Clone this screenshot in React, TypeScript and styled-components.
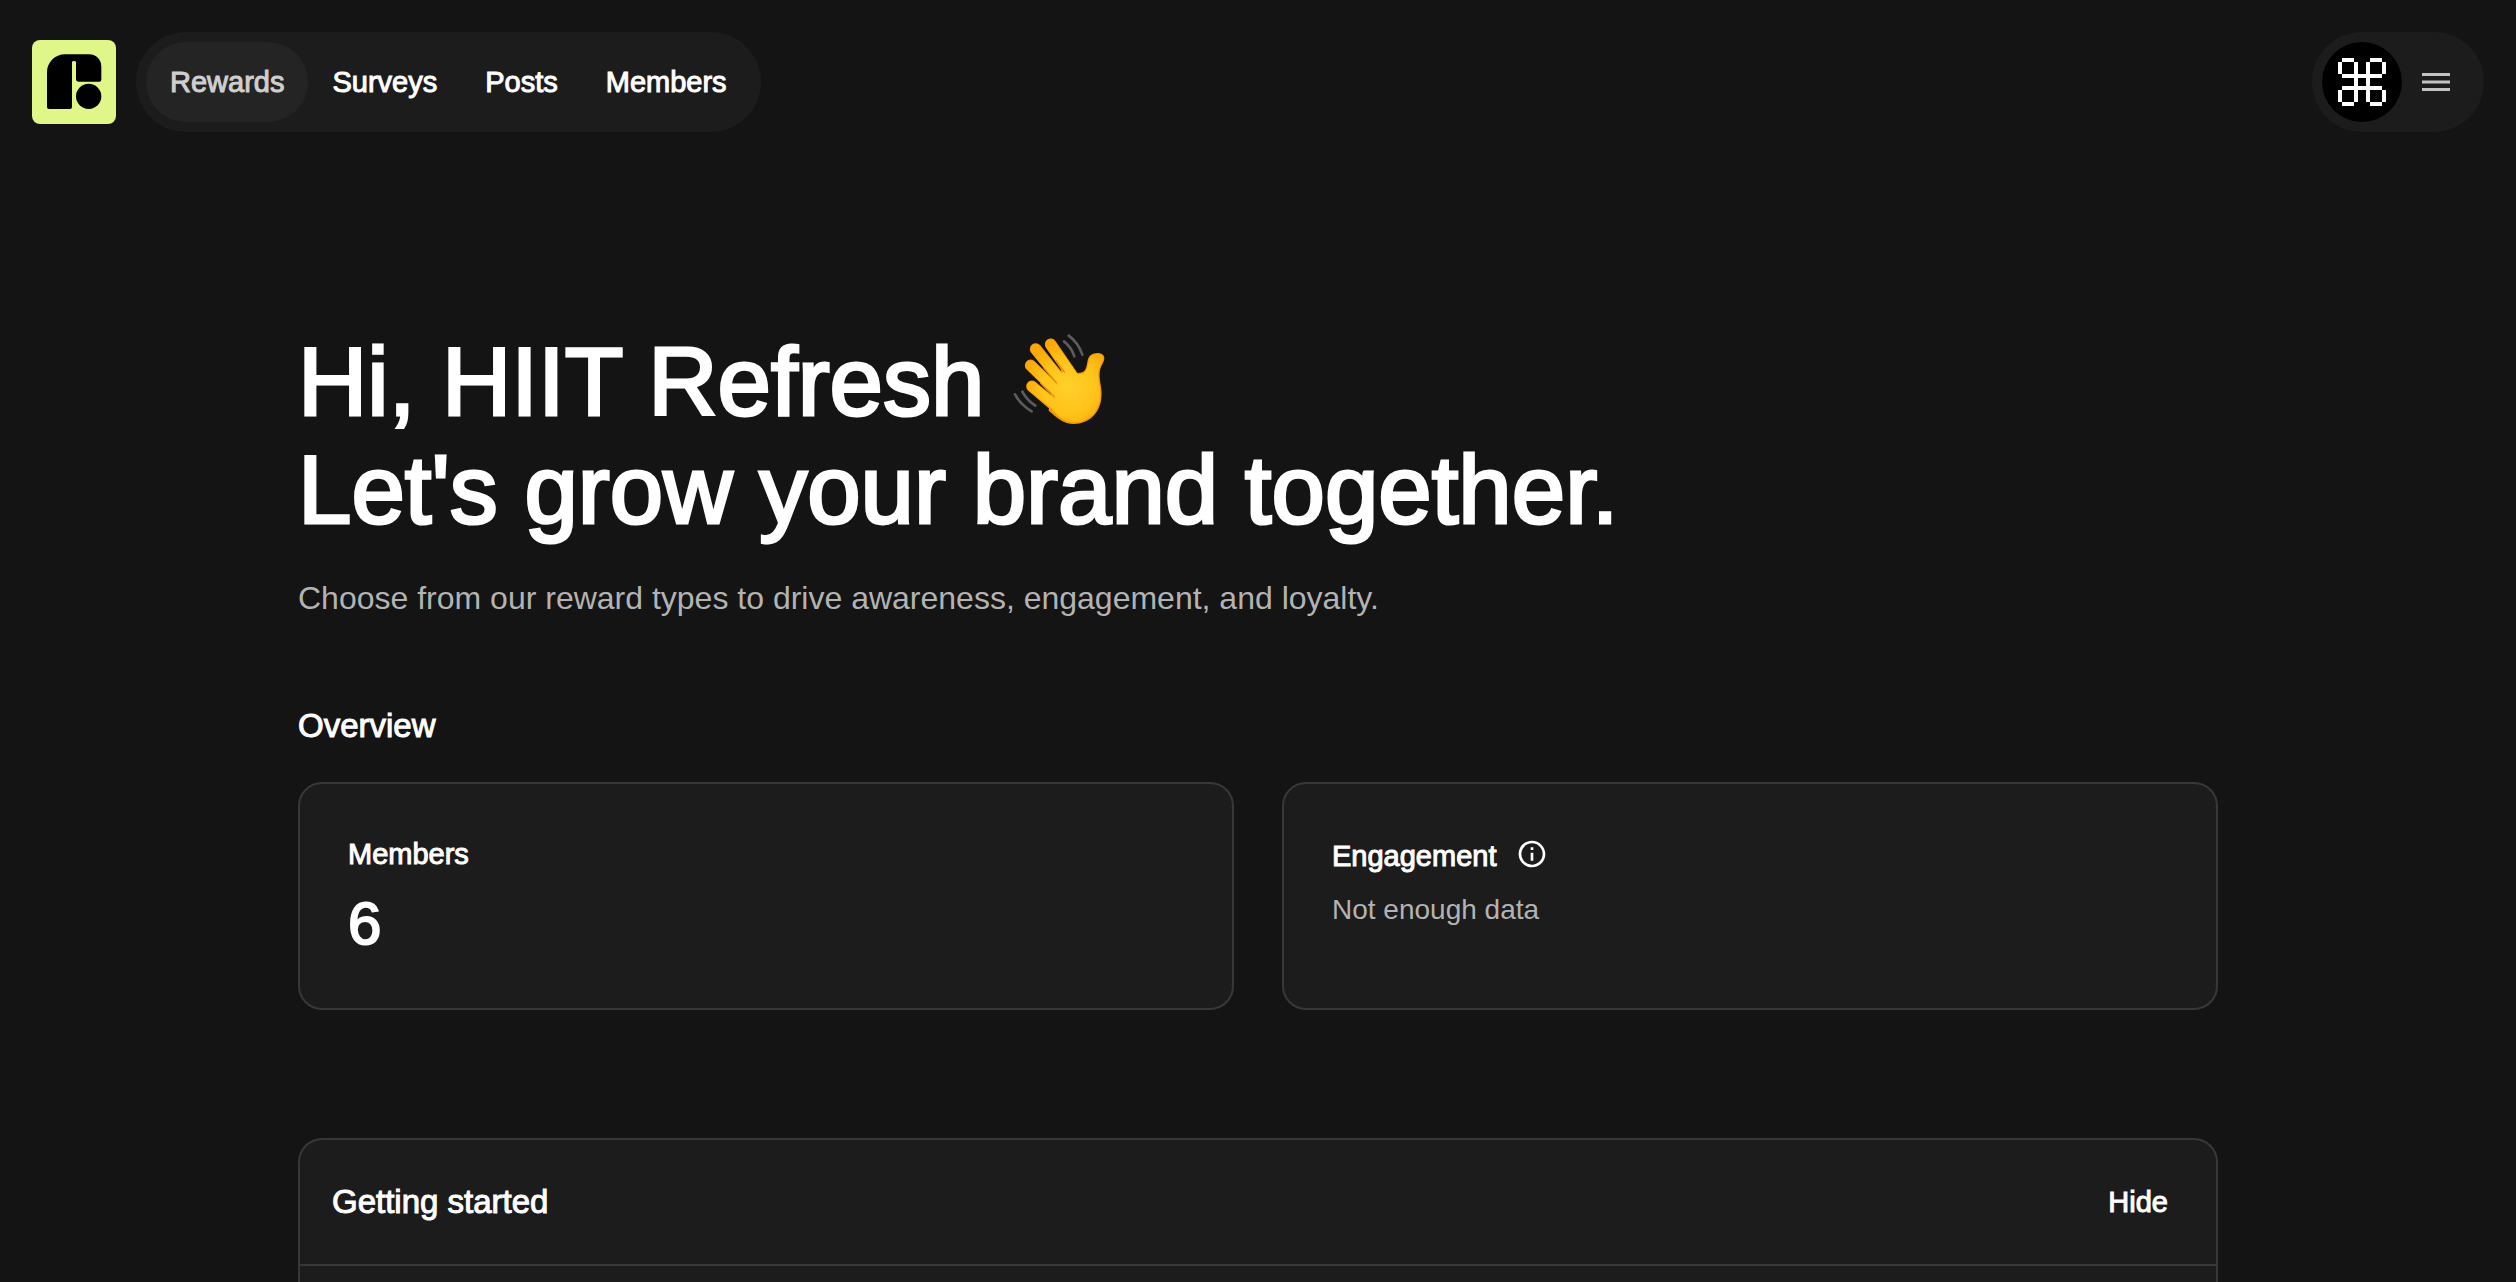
import React from "react";
import styled, { createGlobalStyle } from "styled-components";

const GlobalStyle = createGlobalStyle`
  * { box-sizing: border-box; }
  body {
    margin: 0;
    background: #141414;
    color: #ffffff;
    font-family: "Liberation Sans", Arial, sans-serif;
    font-size: 28px;
    line-height: 44px;
  }
  h1, h2, h3, p { margin: 0; font-weight: 400; }
`;

const Page = styled.div`
  min-height: 100vh;
  display: flex;
  flex-direction: column;
`;

const Header = styled.header`
  display: flex;
  align-items: center;
  gap: 20px;
  padding: 32px;
`;

const LogoLink = styled.a`
  display: flex;
  width: 84px;
  height: 84px;
  border-radius: 8px;
  background: #dff688;
`;

const Capsule = styled.div`
  display: flex;
  align-items: center;
  height: 100px;
  padding: 10px;
  border-radius: 50px;
  background: #1c1c1c;
`;

const Account = styled(Capsule)`
  margin-left: auto;
`;

const NavLink = styled.a<{ $active?: boolean }>`
  display: flex;
  align-items: center;
  height: 80px;
  padding: 0 24px;
  border-radius: 40px;
  color: ${(p) => (p.$active ? "#cfcfcf" : "#ffffff")};
  background: ${(p) => (p.$active ? "#242424" : "transparent")};
  font-size: 29px;
  text-decoration: none;
  -webkit-text-stroke: 1px currentColor;
`;

const PlainButton = styled.button`
  display: flex;
  align-items: center;
  justify-content: center;
  border: 0;
  padding: 0;
  background: none;
  color: inherit;
  font: inherit;
  cursor: pointer;
`;

const AvatarButton = styled(PlainButton)`
  width: 80px;
  height: 80px;
  border-radius: 50%;
  background: #000000;
`;

const MenuButton = styled(PlainButton)`
  height: 80px;
  padding: 0 24px 0 20px;
  color: #c2c2c2;
`;

const HideButton = styled(PlainButton)`
  padding: 8px 16px;
  font-size: 29px;
  -webkit-text-stroke: 1px currentColor;
`;

const Main = styled.main`
  flex: 1;
  display: flex;
  flex-direction: column;
  width: 100%;
  max-width: 1984px;
  margin: 0 auto;
  padding: 164px 32px 0;
`;

const Greeting = styled.h1`
  font-size: 96px;
  line-height: 108px;
  -webkit-text-stroke: 3px currentColor;
`;

const Wave = styled.svg`
  width: 96px;
  height: 96px;
  vertical-align: -11px;
`;

const Subtitle = styled.p`
  margin-top: 30px;
  font-size: 32px;
  line-height: 48px;
  color: #b3b3b3;
`;

const SectionTitle = styled.h2`
  font-size: 33px;
  line-height: 48px;
  -webkit-text-stroke: 1px currentColor;
`;

const Overview = styled.section`
  display: flex;
  flex-direction: column;
  gap: 32px;
  margin-top: 80px;
`;

const Cards = styled.div`
  display: grid;
  grid-template-columns: 1fr 1fr;
  gap: 48px;
`;

const Card = styled.article`
  padding: 48px;
  border: 2px solid #383838;
  border-radius: 24px;
  background: #1c1c1c;
`;

const CardTitle = styled.h3`
  font-size: 29px;
  line-height: 44px;
  -webkit-text-stroke: 1px currentColor;
`;

const CardTitleRow = styled.div`
  display: flex;
  align-items: center;
  gap: 20px;
  height: 48px;
`;

const InfoButton = styled(PlainButton)`
  margin-bottom: 4px;
`;

const Figure = styled.p`
  margin-top: 12px;
  font-size: 60px;
  line-height: 72px;
  -webkit-text-stroke: 2px currentColor;
`;

const CardNote = styled.p`
  margin-top: 8px;
  color: #b3b3b3;
`;

const Panel = styled.section`
  flex: 1;
  margin-top: 128px;
  border: 2px solid #383838;
  border-bottom: 0;
  border-radius: 24px 24px 0 0;
  background: #1c1c1c;
`;

const PanelHeader = styled.div`
  display: flex;
  align-items: center;
  justify-content: space-between;
  height: 126px;
  padding: 0 32px;
  border-bottom: 2px solid #383838;
`;

const navItems = ["Rewards", "Surveys", "Posts", "Members"];

function Logo() {
  return (
    <svg viewBox="0 0 252 252" width="84" height="84" aria-hidden="true">
      <path d="M99 43H172C192 43 208 59 208 79V119Q208 125 202 125H139Q132 125 132 118V67Q132 63 126 63Q120 63 120 67V201Q120 207 114 207H51Q45 207 45 201V97C45 67 69 43 99 43Z" />
      <circle cx="170" cy="169" r="38" />
    </svg>
  );
}

function CommandGlyph() {
  return (
    <svg viewBox="0 0 12 12" width="48" height="48" fill="#fff" shapeRendering="crispEdges" aria-hidden="true">
      <path d="M1 0h3v1H1zM8 0h3v1H8zM0 1h1v3H0zM4 1h1v10H4zM7 1h1v10H7zM11 1h1v3h-1zM1 4h10v1H1zM1 7h10v1H1zM0 8h1v3H0zM11 8h1v3h-1zM1 11h3v1H1zM8 11h3v1H8z" />
    </svg>
  );
}

function MenuGlyph() {
  return (
    <svg viewBox="0 0 28 18" width="28" height="18" fill="currentColor" aria-hidden="true">
      <path d="M0 0h28v3H0zM0 7.5h28v3H0zM0 15h28v3H0z" />
    </svg>
  );
}

function InfoGlyph() {
  return (
    <svg viewBox="0 0 24 24" width="32" height="32" fill="currentColor" aria-hidden="true">
      <path d="M11 7h2v2h-2zm0 4h2v6h-2zm1-9C6.48 2 2 6.48 2 12s4.48 10 10 10 10-4.48 10-10S17.52 2 12 2zm0 18c-4.41 0-8-3.59-8-8s3.59-8 8-8 8 3.59 8 8-3.59 8-8 8z" />
    </svg>
  );
}

function WavingHand() {
  return (
    <Wave viewBox="77 61 288 288" role="img" aria-label="Waving hand">
      <defs>
        <radialGradient id="skin" gradientUnits="userSpaceOnUse" cx="250" cy="230" r="135">
          <stop offset="0" stopColor="#ffd02c" />
          <stop offset="0.6" stopColor="#ffc41a" />
          <stop offset="1" stopColor="#fba90a" />
        </radialGradient>
      </defs>
      <g fill="none" stroke="#5c5c60" strokeWidth="8" strokeLinecap="round">
        <path d="M250 78Q279 99 291 135" />
        <path d="M236 95Q258 112 267 140" />
        <path d="M89 254Q106 286 139 305" />
        <path d="M111 246Q126 273 150 288" />
      </g>
      <g fill="none" stroke="#f39a06" strokeWidth="35" strokeLinecap="round">
        <path d="M196 104L262 200" />
        <path d="M151 118L240 228" />
        <path d="M136 167L225 254" />
        <path d="M140 230L220 298" />
      </g>
      <path
        fill="#f39a06"
        d="M236 166L262 188Q275 192 290 188C309 182 302 150 313 139C325 125 357 127 357 145C357 160 345 166 343 190C341 216 352 234 348 266C343 312 310 343 266 343C235 343 214 324 190 303L200 230Z"
      />
      <g fill="none" stroke="url(#skin)" strokeWidth="30" strokeLinecap="round">
        <path d="M196 105L262 200" />
        <path d="M151 119L240 228" />
        <path d="M136 168L225 254" />
        <path d="M140 231L220 294" />
      </g>
      <path
        fill="url(#skin)"
        d="M236 174L258 190Q275 197 292 192C312 184 306 152 316 142C326 131 353 131 353 145C353 159 341 166 339 190C337 216 348 234 344 265C339 308 308 338 267 338C236 338 217 318 202 302L212 240Z"
      />
      <g fill="none" stroke="#e98d03" strokeWidth="4" strokeLinecap="round">
        <path d="M212 153L237 187" />
        <path d="M176 176L213 219" />
        <path d="M166 221L196 253" />
      </g>
    </Wave>
  );
}

export default function App() {
  return (
    <Page>
      <GlobalStyle />
      <Header>
        <LogoLink href="#" aria-label="Home">
          <Logo />
        </LogoLink>
        <Capsule as="nav">
          {navItems.map((item, i) => (
            <NavLink key={item} href="#" $active={i === 0}>
              {item}
            </NavLink>
          ))}
        </Capsule>
        <Account>
          <AvatarButton aria-label="Account">
            <CommandGlyph />
          </AvatarButton>
          <MenuButton aria-label="Menu">
            <MenuGlyph />
          </MenuButton>
        </Account>
      </Header>
      <Main>
        <Greeting>
          Hi, HIIT Refresh <WavingHand />
          <br />
          Let's grow your brand together.
        </Greeting>
        <Subtitle>
          Choose from our reward types to drive awareness, engagement, and loyalty.
        </Subtitle>
        <Overview>
          <SectionTitle>Overview</SectionTitle>
          <Cards>
            <Card>
              <CardTitle>Members</CardTitle>
              <Figure>6</Figure>
            </Card>
            <Card>
              <CardTitleRow>
                <CardTitle>Engagement</CardTitle>
                <InfoButton aria-label="About engagement">
                  <InfoGlyph />
                </InfoButton>
              </CardTitleRow>
              <CardNote>Not enough data</CardNote>
            </Card>
          </Cards>
        </Overview>
        <Panel>
          <PanelHeader>
            <SectionTitle>Getting started</SectionTitle>
            <HideButton>Hide</HideButton>
          </PanelHeader>
        </Panel>
      </Main>
    </Page>
  );
}
